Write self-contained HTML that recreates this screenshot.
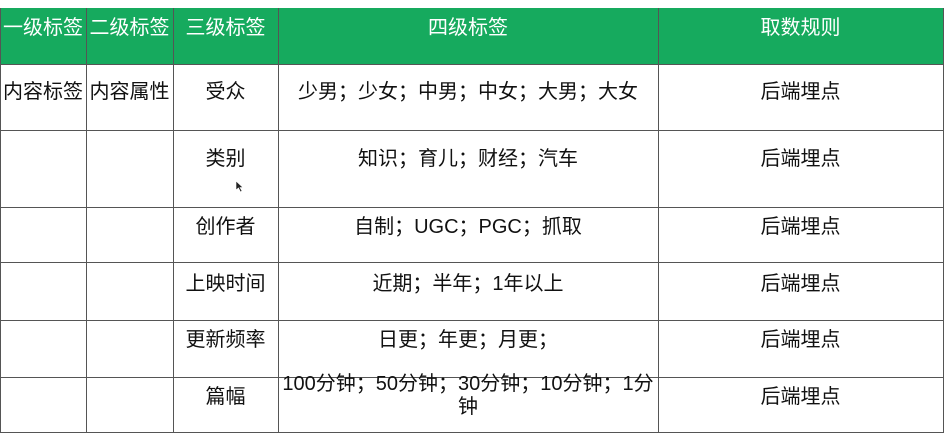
<!DOCTYPE html><html><head><meta charset="utf-8"><style>
body{margin:0;width:948px;height:438px;background:#fff;position:relative;overflow:hidden;font-family:"Liberation Sans","Noto Sans CJK SC",sans-serif;}
.h{position:absolute;top:8px;left:0;width:944px;height:56px;background:#16aa5e;}
.v,.l{position:absolute;background:#555;}
.t{position:absolute;font-size:20px;color:#111;text-align:center;line-height:23px;white-space:nowrap;}
.w{color:#fff;}
</style></head><body>
<div class="h"></div>
<div class="v" style="left:0;top:8px;width:1px;height:425px"></div>
<div class="v" style="left:86px;top:8px;width:1px;height:425px"></div>
<div class="v" style="left:173px;top:8px;width:1px;height:425px"></div>
<div class="v" style="left:278px;top:8px;width:1px;height:425px"></div>
<div class="v" style="left:658px;top:8px;width:1px;height:425px"></div>
<div class="v" style="left:943px;top:8px;width:1px;height:425px"></div>
<div class="l" style="left:0;top:64px;width:944px;height:1px"></div>
<div class="l" style="left:0;top:130px;width:944px;height:1px"></div>
<div class="l" style="left:0;top:207px;width:944px;height:1px"></div>
<div class="l" style="left:0;top:262px;width:944px;height:1px"></div>
<div class="l" style="left:0;top:320px;width:944px;height:1px"></div>
<div class="l" style="left:0;top:377px;width:944px;height:1px"></div>
<div class="l" style="left:0;top:432px;width:944px;height:1px"></div>
<div class="t w" style="left:0;width:86px;top:17px">一级标签</div>
<div class="t w" style="left:86px;width:87px;top:17px">二级标签</div>
<div class="t w" style="left:173px;width:105px;top:17px">三级标签</div>
<div class="t w" style="left:278px;width:380px;top:17px">四级标签</div>
<div class="t w" style="left:658px;width:285px;top:17px">取数规则</div>
<div class="t" style="left:0;width:86px;top:81px">内容标签</div>
<div class="t" style="left:86px;width:87px;top:81px">内容属性</div>
<div class="t" style="left:173px;width:105px;top:81px">受众</div>
<div class="t" style="left:278px;width:380px;top:81px">少男；少女；中男；中女；大男；大女</div>
<div class="t" style="left:658px;width:285px;top:81px">后端埋点</div>
<div class="t" style="left:173px;width:105px;top:148px">类别</div>
<div class="t" style="left:278px;width:380px;top:148px">知识；育儿；财经；汽车</div>
<div class="t" style="left:658px;width:285px;top:148px">后端埋点</div>
<div class="t" style="left:173px;width:105px;top:216px">创作者</div>
<div class="t" style="left:278px;width:380px;top:216px">自制；UGC；PGC；抓取</div>
<div class="t" style="left:658px;width:285px;top:216px">后端埋点</div>
<div class="t" style="left:173px;width:105px;top:273px">上映时间</div>
<div class="t" style="left:278px;width:380px;top:273px">近期；半年；1年以上</div>
<div class="t" style="left:658px;width:285px;top:273px">后端埋点</div>
<div class="t" style="left:173px;width:105px;top:329px">更新频率</div>
<div class="t" style="left:278px;width:380px;top:329px">日更；年更；月更；</div>
<div class="t" style="left:658px;width:285px;top:329px">后端埋点</div>
<div class="t" style="left:173px;width:105px;top:386px">篇幅</div>
<div class="t" style="left:278px;width:380px;top:373px">100分钟；50分钟；30分钟；10分钟；1分</div>
<div class="t" style="left:278px;width:380px;top:396px">钟</div>
<div class="t" style="left:658px;width:285px;top:386px">后端埋点</div>
<svg style="position:absolute;left:235px;top:180px" width="9" height="13" viewBox="0 0 9 13"><path d="M1 1 L1 10 L3.5 8 L5.5 12 L7 11 L5 7.5 L8 7.5 Z" fill="#222" stroke="#fff" stroke-width="0.6"/></svg>
</body></html>
